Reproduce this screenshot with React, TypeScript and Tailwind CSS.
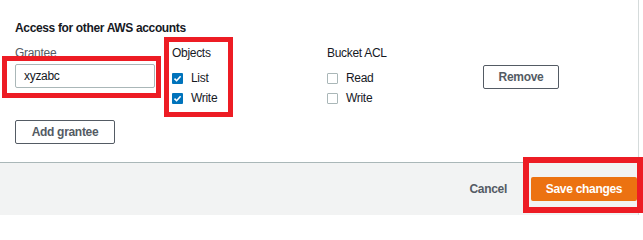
export default function App() {
  const font = { fontFamily: '"Liberation Sans", Arial, sans-serif' };

  const Check = ({ checked, label }: { checked: boolean; label: string }) => (
    <div className="flex items-center h-[20px]">
      {checked ? (
        <span className="w-[11px] h-[11px] bg-[#0073bb] rounded-[1px] flex items-center justify-center">
          <svg width="9" height="9" viewBox="0 0 9 9">
            <path d="M1.5 4.6 L3.6 6.7 L7.6 2.2" fill="none" stroke="#fff" strokeWidth="1.6" />
          </svg>
        </span>
      ) : (
        <span className="w-[11px] h-[11px] bg-white border border-[#aab7b8] rounded-[1px]" />
      )}
      <span className="ml-[8px] text-[12px] tracking-[-0.3px] text-[#16191f] leading-[16px]">{label}</span>
    </div>
  );

  return (
    <div className="relative w-[643px] h-[215px] bg-white overflow-hidden" style={font}>
      <div className="w-[639px] h-full border-r border-[#d5dbdb] flex flex-col">
        {/* panel body */}
        <div className="h-[163px] pt-[20px] pl-[15px] border-b border-[#aab7b8]">
          <h3 className="text-[12px] tracking-[-0.35px] leading-[16px] font-bold text-[#16191f]">
            Access for other AWS accounts
          </h3>
          <div className="flex mt-[9px]">
            <div className="w-[140px]">
              <div className="text-[12px] tracking-[-0.3px] leading-[16px] text-[#545b64]">Grantee</div>
              <div className="mt-[3px] h-[24px] border border-[#aab7b8] rounded-[2px] px-[8px] flex items-center text-[12px] tracking-[-0.3px] text-[#16191f]">
                xyzabc
              </div>
            </div>
            <div className="ml-[17px] w-[155px]">
              <div className="text-[12px] tracking-[-0.3px] leading-[16px] text-[#16191f]">Objects</div>
              <div className="mt-[7px]">
                <Check checked label="List" />
                <Check checked label="Write" />
              </div>
            </div>
            <div className="w-[156px]">
              <div className="text-[12px] tracking-[-0.3px] leading-[16px] text-[#16191f]">Bucket ACL</div>
              <div className="mt-[7px]">
                <Check checked={false} label="Read" />
                <Check checked={false} label="Write" />
              </div>
            </div>
            <div className="pt-[19px]">
              <button className="w-[76px] h-[24px] border border-[#545b64] rounded-[2px] bg-white text-[12px] tracking-[-0.3px] font-bold text-[#545b64]">
                Remove
              </button>
            </div>
          </div>
          <button className="mt-[12px] w-[100px] h-[24px] border border-[#545b64] rounded-[2px] bg-white text-[12px] tracking-[-0.3px] font-bold text-[#545b64]">
            Add grantee
          </button>
        </div>

        {/* footer */}
        <div className="flex-1 bg-[#f2f3f3] flex items-center justify-end pr-[1px]">
          <span className="text-[12px] tracking-[-0.3px] font-bold text-[#545b64] mr-[24px]">Cancel</span>
          <button className="w-[106px] h-[24px] bg-[#ec7211] rounded-[2px] text-[12px] tracking-[-0.3px] font-bold text-white">
            Save changes
          </button>
        </div>
      </div>

      {/* red annotation boxes */}
      <div className="absolute left-[2px] top-[56px] w-[159px] h-[42px] border-[5px] border-[#ed1c24]" />
      <div className="absolute left-[164px] top-[37px] w-[69px] h-[80px] border-[5px] border-[#ed1c24]" />
      <div className="absolute left-[523px] top-[157px] w-[120px] h-[56px] border-[6px] border-[#ed1c24]" />
    </div>
  );
}
